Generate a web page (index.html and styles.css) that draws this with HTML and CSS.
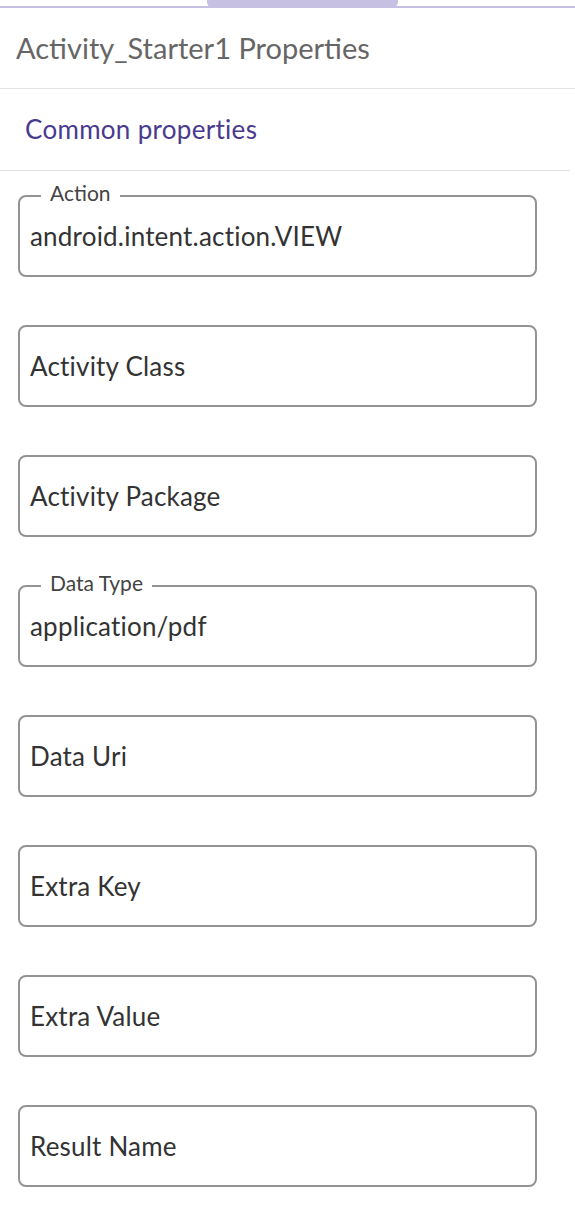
FILE: index.html
```html
<!DOCTYPE html>
<html lang="en">
<head>
    <meta charset="UTF-8">
    <meta name="viewport" content="width=device-width, initial-scale=1.0">
    <title>Activity_Starter1 Properties</title>
    <link rel="stylesheet" href="styles.css">
</head>
<body>

    <div class="tabbar">
        <div class="tab"></div>
    </div>

    <div class="panel-title">Activity_Starter1 Properties</div>

    <div class="section-title">Common properties</div>

    <div class="fields">
        <div class="field">
            <span class="field-label">Action</span>
            <span class="field-value">android.intent.action.VIEW</span>
        </div>
        <div class="field">
            <span class="field-value">Activity Class</span>
        </div>
        <div class="field">
            <span class="field-value">Activity Package</span>
        </div>
        <div class="field">
            <span class="field-label">Data Type</span>
            <span class="field-value">application/pdf</span>
        </div>
        <div class="field">
            <span class="field-value">Data Uri</span>
        </div>
        <div class="field">
            <span class="field-value">Extra Key</span>
        </div>
        <div class="field">
            <span class="field-value">Extra Value</span>
        </div>
        <div class="field">
            <span class="field-value">Result Name</span>
        </div>
    </div>

</body>
</html>
```

FILE: styles.css
```css
body {
    margin: 0;
    font-family: Lato, "Open Sans", sans-serif;
    background-color: #fff;
    color: #333;
}
.tabbar {
    height: 6px;
    border-bottom: 2px solid #c6c0e2; /* lavender strip */
    display: flex;
}
.tab {
    margin-left: 207px;
    width: 191px;
    height: 8px;
    background-color: #c6c0e2;
    border-radius: 0 0 6px 6px;
}
.panel-title {
    height: 80px;
    padding-left: 16px;
    font-size: 29px;
    line-height: 80px;
    color: #666;
    border-bottom: 1px solid #e2e2e2;
}
.section-title {
    height: 81px;
    padding-left: 25px;
    font-size: 26px;
    letter-spacing: 0.3px;
    line-height: 80px;
    color: #4a3a8e;
    border-bottom: 1px solid #e2e2e2;
    margin-right: 5px;
}
.fields {
    display: flex;
    flex-direction: column;
    gap: 48px;
    padding: 24px 38px 0 18px;
}
.field {
    position: relative;
    box-sizing: border-box;
    height: 82px;
    display: flex;
    align-items: center;
    padding-left: 10px;
    border: 2px solid #939393;
    border-radius: 8px;
}
.field-label {
    position: absolute;
    top: -17px;
    left: 21px;
    padding: 0 9px;
    background-color: #fff;
    font-size: 21px;
    line-height: 26px;
    color: #444;
}
.field-value {
    font-size: 26px;
    letter-spacing: 0.2px;
    color: #333;
}
```
